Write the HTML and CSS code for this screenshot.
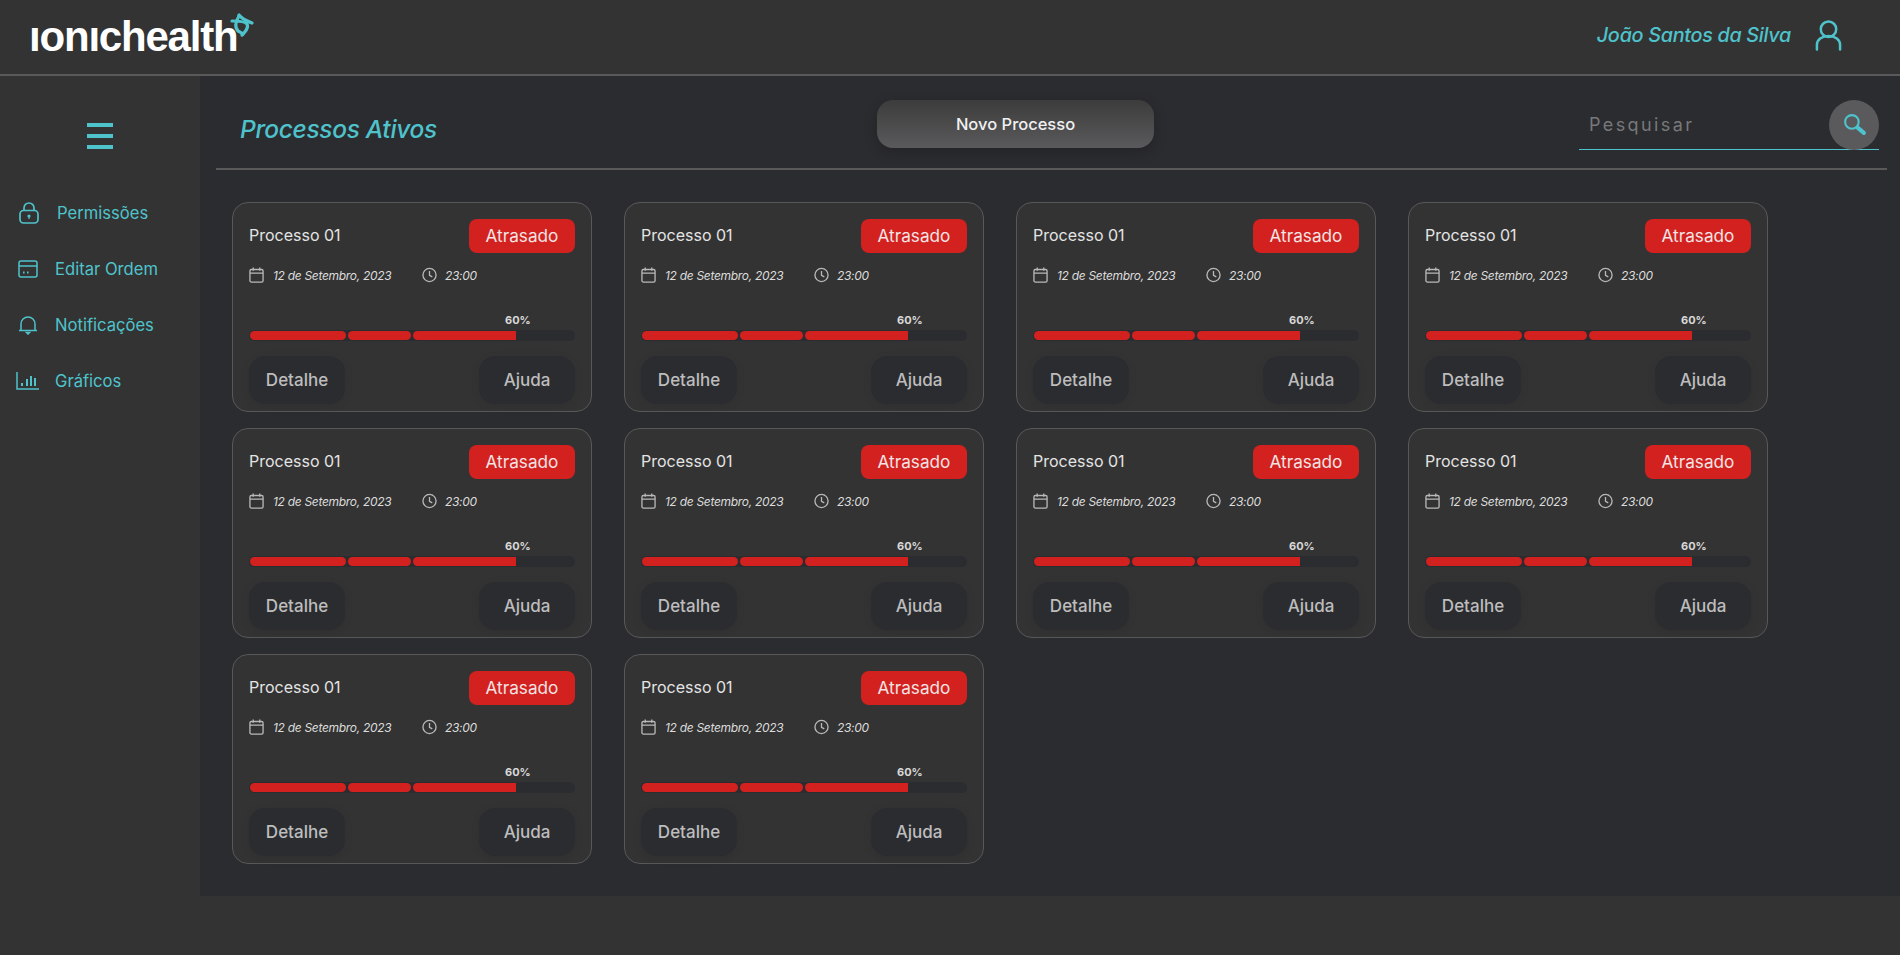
FILE: index.html
```html
<!DOCTYPE html>
<html lang="pt-BR">
<head>
  <meta charset="UTF-8">
  <title>Processos Ativos</title>
  <link rel="stylesheet" href="styles.css">
</head>
<body>

<svg class="sprites" width="0" height="0">
  <symbol id="i-cal" viewBox="0 0 16 17"><g fill="none" stroke="currentColor" stroke-width="1.4"><rect x="1" y="2.6" width="14" height="13.4" rx="1.5"/><path d="M1 6.4h14M4.5 .6v3.4M11.5 .6v3.4"/></g></symbol>
  <symbol id="i-clock" viewBox="0 0 16 16"><g fill="none" stroke="currentColor" stroke-width="1.4"><circle cx="8" cy="8" r="7"/><path d="M8 3.6V8.4l3 1.6"/></g></symbol>
</svg>

<header class="topbar">
  <div class="logo">
    <span class="logo-text">ıonıchealth</span>
    <svg class="logo-mark" viewBox="0 0 24 24" fill="none" stroke="#4fc3cc" stroke-width="3.2" stroke-linecap="round">
      <path d="M9 2C11 5 14 7 22 10"/>
      <path d="M2 8C7 8 15 8 17 11 19 15 15 19 12 22"/>
      <path d="M9 3C6 8 4 14 8 18 10 19 12 20 13 21"/>
    </svg>
  </div>
  <div class="user">
    <span class="user-name">João Santos da Silva</span>
    <svg class="user-icon" viewBox="0 0 28 32" fill="none" stroke="#4fc3cc" stroke-width="2.6" stroke-linecap="round">
      <circle cx="14" cy="10" r="8"/>
      <path d="M2 31v-5c0-5 5-9 12-9s12 4 12 9v5"/>
    </svg>
  </div>
</header>

<div class="layout">
  <aside class="sidebar">
    <div class="menu-btn"><span></span><span></span><span></span></div>
    <nav class="nav">
      <a class="nav-item nav-first">
        <svg viewBox="0 0 20 22" fill="none" stroke="currentColor" stroke-width="1.7"><rect x="1" y="8.5" width="18" height="12.5" rx="3.5"/><path d="M5 8.5V6a5 5 0 0 1 10 0v2.5"/><circle cx="10" cy="14" r="1.6" fill="currentColor" stroke="none"/><path d="M10 14v3" stroke-width="1.2"/></svg>
        Permissões
      </a>
      <a class="nav-item nav-card">
        <svg viewBox="0 0 20 18" fill="none" stroke="currentColor" stroke-width="1.5"><rect x="1" y="1" width="18" height="16" rx="2"/><path d="M1 6h18"/><path d="M5 12.5h1.6M9 12.5h1.6" stroke-width="2"/></svg>
        Editar Ordem
      </a>
      <a class="nav-item">
        <svg viewBox="0 0 20 20" fill="none" stroke="currentColor" stroke-width="1.5"><path d="M3 15.5V9a7 7 0 0 1 14 0v6.500"/><path d="M1 15.500h18"/><path d="M8.500 17.500h3l-1.500 1.500z" fill="currentColor"/></svg>
        Notificações
      </a>
      <a class="nav-item nav-chart">
        <svg viewBox="0 0 24 18" fill="none" stroke="currentColor" stroke-width="1.500"><path d="M1 0v17h22"/><path d="M6 14v-3M11 14V7M15 14V4M19 14V6" stroke-width="2"/></svg>
        Gráficos
      </a>
    </nav>
  </aside>

  <main class="content">
    <div class="content-head">
      <h1 class="page-title">Processos Ativos</h1>
      <button class="new-btn">Novo Processo</button>
      <div class="search">
        <span class="search-text">Pesquisar</span>
        <span class="search-btn">
          <svg viewBox="0 0 24 24" fill="none" stroke="#4fc3cc"><circle cx="9.500" cy="9.500" r="6.500" stroke-width="2"/><path d="M15 15l6 5" stroke-width="4" stroke-linecap="round"/></svg>
        </span>
      </div>
    </div>

    <div class="cards">
      <div class="card">
        <div class="card-top"><span class="card-title">Processo 01</span><span class="badge">Atrasado</span></div>
        <div class="card-meta"><svg class="ic"><use href="#i-cal"/></svg><em class="date">12 de Setembro, 2023</em><svg class="ic ic-clock"><use href="#i-clock"/></svg><em>23:00</em></div>
        <div class="pct">60%</div>
        <div class="bar"><i class="seg1"></i><i class="seg2"></i><i class="seg3"></i></div>
        <div class="card-btns"><button class="soft-btn">Detalhe</button><button class="soft-btn">Ajuda</button></div>
      </div>
      <div class="card">
        <div class="card-top"><span class="card-title">Processo 01</span><span class="badge">Atrasado</span></div>
        <div class="card-meta"><svg class="ic"><use href="#i-cal"/></svg><em class="date">12 de Setembro, 2023</em><svg class="ic ic-clock"><use href="#i-clock"/></svg><em>23:00</em></div>
        <div class="pct">60%</div>
        <div class="bar"><i class="seg1"></i><i class="seg2"></i><i class="seg3"></i></div>
        <div class="card-btns"><button class="soft-btn">Detalhe</button><button class="soft-btn">Ajuda</button></div>
      </div>
      <div class="card">
        <div class="card-top"><span class="card-title">Processo 01</span><span class="badge">Atrasado</span></div>
        <div class="card-meta"><svg class="ic"><use href="#i-cal"/></svg><em class="date">12 de Setembro, 2023</em><svg class="ic ic-clock"><use href="#i-clock"/></svg><em>23:00</em></div>
        <div class="pct">60%</div>
        <div class="bar"><i class="seg1"></i><i class="seg2"></i><i class="seg3"></i></div>
        <div class="card-btns"><button class="soft-btn">Detalhe</button><button class="soft-btn">Ajuda</button></div>
      </div>
      <div class="card">
        <div class="card-top"><span class="card-title">Processo 01</span><span class="badge">Atrasado</span></div>
        <div class="card-meta"><svg class="ic"><use href="#i-cal"/></svg><em class="date">12 de Setembro, 2023</em><svg class="ic ic-clock"><use href="#i-clock"/></svg><em>23:00</em></div>
        <div class="pct">60%</div>
        <div class="bar"><i class="seg1"></i><i class="seg2"></i><i class="seg3"></i></div>
        <div class="card-btns"><button class="soft-btn">Detalhe</button><button class="soft-btn">Ajuda</button></div>
      </div>
      <div class="card">
        <div class="card-top"><span class="card-title">Processo 01</span><span class="badge">Atrasado</span></div>
        <div class="card-meta"><svg class="ic"><use href="#i-cal"/></svg><em class="date">12 de Setembro, 2023</em><svg class="ic ic-clock"><use href="#i-clock"/></svg><em>23:00</em></div>
        <div class="pct">60%</div>
        <div class="bar"><i class="seg1"></i><i class="seg2"></i><i class="seg3"></i></div>
        <div class="card-btns"><button class="soft-btn">Detalhe</button><button class="soft-btn">Ajuda</button></div>
      </div>
      <div class="card">
        <div class="card-top"><span class="card-title">Processo 01</span><span class="badge">Atrasado</span></div>
        <div class="card-meta"><svg class="ic"><use href="#i-cal"/></svg><em class="date">12 de Setembro, 2023</em><svg class="ic ic-clock"><use href="#i-clock"/></svg><em>23:00</em></div>
        <div class="pct">60%</div>
        <div class="bar"><i class="seg1"></i><i class="seg2"></i><i class="seg3"></i></div>
        <div class="card-btns"><button class="soft-btn">Detalhe</button><button class="soft-btn">Ajuda</button></div>
      </div>
      <div class="card">
        <div class="card-top"><span class="card-title">Processo 01</span><span class="badge">Atrasado</span></div>
        <div class="card-meta"><svg class="ic"><use href="#i-cal"/></svg><em class="date">12 de Setembro, 2023</em><svg class="ic ic-clock"><use href="#i-clock"/></svg><em>23:00</em></div>
        <div class="pct">60%</div>
        <div class="bar"><i class="seg1"></i><i class="seg2"></i><i class="seg3"></i></div>
        <div class="card-btns"><button class="soft-btn">Detalhe</button><button class="soft-btn">Ajuda</button></div>
      </div>
      <div class="card">
        <div class="card-top"><span class="card-title">Processo 01</span><span class="badge">Atrasado</span></div>
        <div class="card-meta"><svg class="ic"><use href="#i-cal"/></svg><em class="date">12 de Setembro, 2023</em><svg class="ic ic-clock"><use href="#i-clock"/></svg><em>23:00</em></div>
        <div class="pct">60%</div>
        <div class="bar"><i class="seg1"></i><i class="seg2"></i><i class="seg3"></i></div>
        <div class="card-btns"><button class="soft-btn">Detalhe</button><button class="soft-btn">Ajuda</button></div>
      </div>
      <div class="card">
        <div class="card-top"><span class="card-title">Processo 01</span><span class="badge">Atrasado</span></div>
        <div class="card-meta"><svg class="ic"><use href="#i-cal"/></svg><em class="date">12 de Setembro, 2023</em><svg class="ic ic-clock"><use href="#i-clock"/></svg><em>23:00</em></div>
        <div class="pct">60%</div>
        <div class="bar"><i class="seg1"></i><i class="seg2"></i><i class="seg3"></i></div>
        <div class="card-btns"><button class="soft-btn">Detalhe</button><button class="soft-btn">Ajuda</button></div>
      </div>
      <div class="card">
        <div class="card-top"><span class="card-title">Processo 01</span><span class="badge">Atrasado</span></div>
        <div class="card-meta"><svg class="ic"><use href="#i-cal"/></svg><em class="date">12 de Setembro, 2023</em><svg class="ic ic-clock"><use href="#i-clock"/></svg><em>23:00</em></div>
        <div class="pct">60%</div>
        <div class="bar"><i class="seg1"></i><i class="seg2"></i><i class="seg3"></i></div>
        <div class="card-btns"><button class="soft-btn">Detalhe</button><button class="soft-btn">Ajuda</button></div>
      </div>
    </div>
  </main>
</div>

</body>
</html>
```

FILE: styles.css
```css
* {
  box-sizing: border-box;
}

body {
  margin: 0;
  height: 955px;
  overflow: hidden;
  background: #333333;
  font-family: Inter, "Open Sans", sans-serif;
  color: #e6e6e6;
}

.sprites {
  display: block;
  height: 0;
}

.topbar {
  height: 76px;
  border-bottom: 2px solid #5a5a5a;
  display: flex;
  align-items: center;
  justify-content: space-between;
  padding: 0 58px 0 29px;
}

.logo {
  display: flex;
  align-items: flex-start;
}

.logo-text {
  font-family: "Liberation Sans", sans-serif;
  font-weight: 700;
  font-size: 42px;
  line-height: 44px;
  letter-spacing: -1.2px;
  color: #fff;
}

.logo-mark {
  width: 24px;
  height: 24px;
  margin: -2px 0 0 -8px;
}

.user {
  display: flex;
  align-items: center;
  gap: 24px;
  margin-top: -4px;
}

.user-name {
  font-size: 19.8px;
  font-style: italic;
  font-weight: 500;
  letter-spacing: -0.3px;
  color: #4fc3cc;
}

.user-icon {
  width: 27px;
  height: 32px;
}

.layout {
  display: flex;
  height: 820px;
}

.sidebar {
  width: 200px;
  flex-shrink: 0;
  padding-top: 47px;
}

.menu-btn {
  width: 26px;
  margin-left: 87px;
  display: flex;
  flex-direction: column;
  gap: 7.5px;
}

.menu-btn span {
  height: 3.5px;
  background: #4fc3cc;
}

.nav {
  margin-top: 50px;
  display: flex;
  flex-direction: column;
  gap: 28px;
}

.nav-item {
  height: 28px;
  display: flex;
  align-items: center;
  gap: 17px;
  padding-left: 18px;
  font-size: 16.6px;
  color: #4fc3cc;
}

.nav-item svg {
  width: 20px;
  height: 20px;
  flex-shrink: 0;
}

.nav-first {
  padding-left: 19px;
  gap: 18px;
}

.nav-first svg {
  height: 22px;
}

.nav-card svg {
  height: 18px;
}

.nav-chart {
  padding-left: 16px;
  gap: 15px;
}

.nav-chart svg {
  width: 24px;
  height: 18px;
}

.content {
  flex: 1;
  background: #2b2c30;
  padding-left: 16px;
}

.content-head {
  height: 94px;
  margin-right: 13px;
  border-bottom: 2px solid #5a5a5a;
  display: grid;
  grid-template-columns: 661px 277px 1fr;
  align-items: center;
  padding-right: 8px;
}

.page-title {
  margin: 14px 0 0 24px;
  font-size: 24.5px;
  font-weight: 500;
  font-style: italic;
  letter-spacing: -0.3px;
  color: #4fc3cc;
}

.new-btn {
  height: 48px;
  margin-top: 4px;
  border: none;
  border-radius: 16px;
  background: linear-gradient(#3c3c3c, #5a5a5c);
  box-shadow: 0 4px 14px rgba(0, 0, 0, 0.2);
  font: 500 16.5px Inter, sans-serif;
  color: #f0f0f0;
}

.search {
  justify-self: end;
  width: 300px;
  height: 50px;
  margin-top: 6px;
  border-bottom: 1px solid #4fc3cc;
  display: flex;
  align-items: center;
  justify-content: space-between;
  padding-left: 10px;
}

.search-text {
  font-size: 18px;
  letter-spacing: 2.4px;
  color: #77787a;
}

.search-btn {
  width: 50px;
  height: 50px;
  border-radius: 50%;
  background: #5a5a5c;
  display: flex;
  align-items: center;
  justify-content: center;
}

.search-btn svg {
  width: 25px;
  height: 25px;
}

.cards {
  display: grid;
  grid-template-columns: repeat(4, 360px);
  gap: 16px 32px;
  padding: 32px 0 0 16px;
}

.card {
  height: 210px;
  background: #333333;
  border: 1px solid #58585a;
  border-radius: 16px;
  padding: 16px;
}

.card-top {
  display: flex;
  justify-content: space-between;
  align-items: center;
  height: 34px;
}

.card-title {
  font-size: 16px;
  margin-top: -2px;
  color: #e4e4e4;
}

.badge {
  width: 106px;
  height: 34px;
  border-radius: 8px;
  background: #d2211f;
  display: flex;
  align-items: center;
  justify-content: center;
  padding-bottom: 2px;
  font-size: 17.2px;
  color: #f2e4e4;
}

.card-meta {
  display: flex;
  align-items: center;
  height: 16px;
  margin-top: 14px;
  font-size: 12px;
  letter-spacing: -0.3px;
  color: #dcdcdc;
}

.card-meta em {
  font-style: italic;
}

.ic {
  width: 15px;
  height: 16px;
  margin-right: 9px;
  color: #b9b9b9;
}

.date {
  width: 149px;
}

.ic-clock {
  margin-right: 8px;
}

.pct {
  margin-top: 30px;
  padding-left: 256px;
  height: 15px;
  font-size: 11px;
  font-weight: 700;
  line-height: 15px;
  color: #d8d8d8;
}

.bar {
  height: 11px;
  margin-top: 2px;
  background: #2b2c30;
  border-radius: 6px;
  display: flex;
  align-items: center;
  padding-left: 1px;
  gap: 2px;
}

.bar i {
  display: block;
  height: 9px;
  background: #d2211f;
}

.seg1 {
  width: 96px;
  border-radius: 5px;
}

.seg2 {
  width: 63px;
  border-radius: 5px;
}

.seg3 {
  width: 103px;
  border-radius: 5px 0 0 5px;
}

.card-btns {
  display: flex;
  justify-content: space-between;
  margin-top: 15px;
}

.soft-btn {
  width: 96px;
  height: 48px;
  border: none;
  border-radius: 16px;
  background: #2b2c30;
  box-shadow: 0 2px 10px rgba(0, 0, 0, 0.08);
  font: 500 17px Inter, sans-serif;
  color: #bdbdbd;
}
```
